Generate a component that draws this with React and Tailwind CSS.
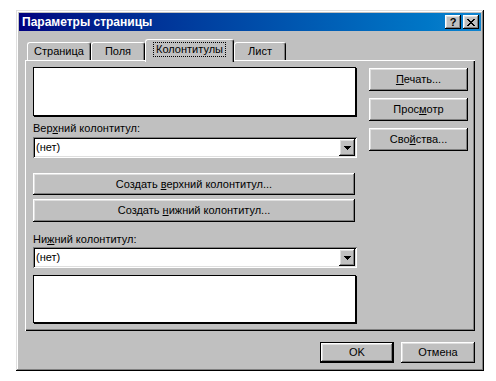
import React from 'react';

const raised = 'shadow-[inset_-1px_-1px_#000,inset_1px_1px_#fff,inset_-2px_-2px_#808080,inset_2px_2px_#dfdfdf]';
const sunken = 'shadow-[inset_1px_1px_#808080,inset_-1px_-1px_#fff,inset_2px_2px_#000,inset_-2px_-2px_#dfdfdf]';

function Btn({ children, className = '' }) {
  return (
    <div className={`flex items-center justify-center bg-[#c0c0c0] text-black ${raised} ${className}`}>
      <span>{children}</span>
    </div>
  );
}

function Combo() {
  return (
    <div className={`flex h-[21px] w-[324px] items-center bg-white p-[2px] ${sunken}`}>
      <span className="flex-1 pl-[1px] leading-[17px]">(нет)</span>
      <div className={`flex h-[17px] w-[16px] items-center justify-center bg-[#c0c0c0] ${raised}`}>
        <svg width="7" height="4" viewBox="0 0 7 4" shapeRendering="crispEdges">
          <path d="M0 0h7v1H0z M1 1h5v1H1z M2 2h3v1H2z M3 3h1v1H3z" fill="#000" />
        </svg>
      </div>
    </div>
  );
}

function Preview({ h }) {
  return <div className={`w-[323px] ${h} border border-black bg-white shadow-[1px_1px_0_#000]`} />;
}

function Tab({ label, w }) {
  return (
    <div className={`${w} flex h-[18px] items-center justify-center self-end rounded-t-[3px] border-l border-t border-r border-l-white border-t-white border-r-black bg-[#c0c0c0] shadow-[inset_-1px_0_#808080]`}>
      {label}
    </div>
  );
}

export default function App() {
  return (
    <div className="h-[381px] w-[496px] bg-white pl-[16px] pt-[10px] font-['Liberation_Sans',Arial,sans-serif] text-[11px] text-black">
      <div className="flex h-[361px] w-[468px] flex-col bg-[#c0c0c0] p-[3px] shadow-[inset_-1px_-1px_#000,inset_1px_1px_#dfdfdf,inset_-2px_-2px_#808080,inset_2px_2px_#fff]">
        {/* title bar */}
        <div className="flex h-[18px] items-center bg-gradient-to-r from-[#000080] to-[#1084d0] pl-[3px] pr-[2px]">
          <span className="flex-1 text-[12px] font-bold text-white">Параметры страницы</span>
          <div className="flex gap-[2px]">
            <div className={`flex h-[14px] w-[16px] items-center justify-center bg-[#c0c0c0] text-[11px] font-bold leading-none ${raised}`}>?</div>
            <div className={`flex h-[14px] w-[16px] items-center justify-center bg-[#c0c0c0] ${raised}`}>
              <svg width="8" height="7" viewBox="0 0 8 7" shapeRendering="crispEdges">
                <path
                  d="M0 0h2v1H0z M6 0h2v1H6z M1 1h2v1H1z M5 1h2v1H5z M2 2h4v1H2z M3 3h2v1H3z M2 4h4v1H2z M1 5h2v1H1z M5 5h2v1H5z M0 6h2v1H0z M6 6h2v1H6z"
                  fill="#000"
                />
              </svg>
            </div>
          </div>
        </div>

        {/* tabs */}
        <div className="ml-[6px] mt-[8px] flex h-[21px] pl-[2px]">
          <Tab label="Страница" w="w-[64px]" />
          <Tab label="Поля" w="w-[54px]" />
          <div className="relative z-10 mb-[-2px] flex h-[23px] w-[89px] items-start justify-center rounded-t-[3px] border-l border-t border-r border-l-white border-t-white border-r-black bg-[#c0c0c0] pt-[2px] shadow-[inset_-1px_0_#808080]">
            <span className="border border-dotted border-black px-[2px] leading-[13px]">Колонтитулы</span>
          </div>
          <Tab label="Лист" w="w-[52px]" />
        </div>

        {/* panel */}
        <div className="ml-[6px] flex h-[271px] w-[450px] px-[8px] pt-[7px] shadow-[inset_1px_1px_#fff,inset_-1px_-1px_#000,inset_-2px_-2px_#808080]">
          <div className="flex w-[324px] flex-col">
            <Preview h="h-[49px]" />
            <div className="mt-[5px] h-[14px] leading-[14px]">
              Вер<u>х</u>ний колонтитул:
            </div>
            <div className="mt-[2px]">
              <Combo />
            </div>
            <Btn className="mt-[15px] h-[22px] w-[322px]">
              Создать <u>в</u>ерхний колонтитул...
            </Btn>
            <Btn className="mt-[4px] h-[23px] w-[322px]">
              Создать <u>н</u>ижний колонтитул...
            </Btn>
            <div className="mt-[10px] h-[14px] leading-[14px]">
              Ни<u>ж</u>ний колонтитул:
            </div>
            <div className="mt-[1px]">
              <Combo />
            </div>
            <div className="mt-[7px]">
              <Preview h="h-[48px]" />
            </div>
          </div>
          <div className="ml-[12px] mt-[1px] flex flex-col gap-[7px]">
            <Btn className="h-[23px] w-[99px]">
              <u>П</u>ечать...
            </Btn>
            <Btn className="h-[23px] w-[99px]">
              Прос<u>м</u>отр
            </Btn>
            <Btn className="h-[23px] w-[99px]">
              Сво<u>й</u>ства...
            </Btn>
          </div>
        </div>

        {/* bottom buttons */}
        <div className="mr-[6px] mt-[11px] flex justify-end gap-[7px]">
          <div className="h-[21px] w-[74px] border border-black">
            <Btn className="h-full w-full">OK</Btn>
          </div>
          <Btn className="h-[21px] w-[74px]">Отмена</Btn>
        </div>
      </div>
    </div>
  );
}
